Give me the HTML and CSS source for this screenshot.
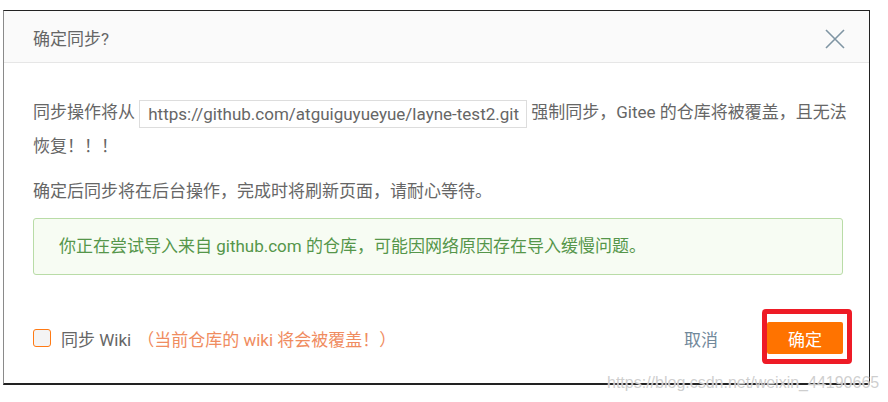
FILE: index.html
```html
<!DOCTYPE html>
<html lang="zh-CN">
<head>
    <meta charset="UTF-8">
    <meta name="viewport" content="width=device-width, initial-scale=1.0">
    <title>确定同步?</title>
    <link rel="stylesheet" href="styles.css">
</head>
<body>
    <div class="modal">
        <div class="modal-header">
            <span class="modal-title">确定同步?</span>
            <svg class="close-icon" width="20" height="20" viewBox="0 0 20 20">
                <path d="M1 1 L19 19 M19 1 L1 19" stroke="#7f95a3" stroke-width="1.6" fill="none"/>
            </svg>
        </div>
        <div class="modal-body">
            <p class="desc desc-wide">同步操作将从 <span class="repo-url">https://github.com/atguiguyueyue/layne-test2.git</span> 强制同步，Gitee 的仓库将被覆盖，且无法恢复！！！</p>
            <p class="desc">确定后同步将在后台操作，完成时将刷新页面，请耐心等待。</p>
            <div class="notice">你正在尝试导入来自 github.com 的仓库，可能因网络原因存在导入缓慢问题。</div>
        </div>
        <div class="modal-footer">
            <label class="wiki-check">
                <span class="checkbox"></span>
                <span class="check-label">同步 Wiki</span>
                <span class="check-warn">（当前仓库的 wiki 将会被覆盖！）</span>
            </label>
            <div class="actions">
                <button class="btn btn-cancel">取消</button>
                <button class="btn btn-ok">确定</button>
            </div>
        </div>
    </div>
    <div class="watermark">https://blog.csdn.net/weixin_44190665</div>
</body>
</html>
```

FILE: styles.css
```css
body {
    margin: 0;
    padding: 10px 0 0 3px;
    background: #fff;
    font-family: Roboto, "Noto Sans CJK SC", sans-serif;
    font-size: 17px;
    color: #666;
}
.modal {
    width: 865px;
    height: 372px;
    border: 1px solid #222;
    border-left-color: #8a8a8a;
    border-bottom-width: 2px;
    background: #fff;
    box-sizing: content-box;
}
.modal-header {
    height: 52px;
    box-sizing: border-box;
    padding: 0 24px 0 29px;
    display: flex;
    align-items: center;
    justify-content: space-between;
    background: #fafafa;
    border-bottom: 1px solid #e6e6e6;
}
.modal-title {
    line-height: 22px;
    padding-top: 4px;
    color: #666;
}
.close-icon {
    display: block;
    margin-top: 4px;
}
.modal-body {
    padding: 32px 26px 0 29px;
}
.desc {
    margin: 0 0 11px;
    line-height: 34px;
}
.desc-wide {
    margin-right: -8px;
}
.repo-url {
    display: inline-block;
    height: 28px;
    line-height: 26px;
    box-sizing: border-box;
    padding: 0 7px 0 8px;
    border: 1px solid #ddd;
    vertical-align: middle;
}
.notice {
    margin-top: -1px;
    padding: 17px 25px;
    line-height: 21px;
    border: 1px solid #b9dca7;
    border-radius: 3px;
    background: #f7fcf3;
    color: #55964a;
}
.modal-footer {
    display: flex;
    align-items: center;
    justify-content: space-between;
    padding: 47px 26px 0 29px;
}
.wiki-check {
    display: flex;
    align-items: center;
}
.checkbox {
    flex: none;
    width: 16px;
    height: 16px;
    border: 1.5px solid #ff7a14;
    border-radius: 3px;
    background: #f4f4f4;
    margin-right: 10px;
}
.check-label {
    color: #666;
}
.check-warn {
    margin-left: 6px;
    color: #f08c60;
}
.actions {
    display: flex;
    align-items: center;
    gap: 28px;
}
.btn {
    font-family: inherit;
    font-size: 17px;
    width: 76px;
    height: 32px;
    border: none;
    border-radius: 2px;
    cursor: pointer;
}
.btn-cancel {
    background: transparent;
    color: #71889a;
}
.btn-ok {
    position: relative;
    background: #ff7300;
    color: #fff;
}
.btn-ok::before {
    content: "";
    position: absolute;
    top: -13px;
    left: -5px;
    right: -9px;
    bottom: -10px;
    border: 5px solid #ee1b26;
    border-radius: 4px;
}
.watermark {
    position: absolute;
    left: 607px;
    top: 374px;
    font-family: "Liberation Sans", Arial, sans-serif;
    font-size: 16px;
    color: rgba(190, 190, 190, 0.75);
    text-shadow: 0 0 1px #fff;
}
```
